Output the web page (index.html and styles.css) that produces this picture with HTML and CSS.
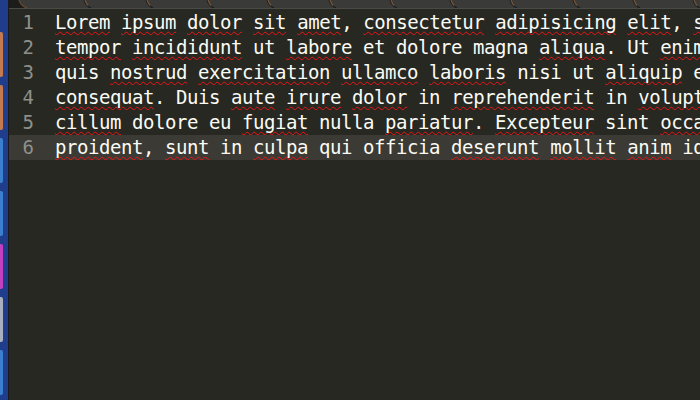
FILE: index.html
```html
<!DOCTYPE html>
<html>
<head>
<meta charset="utf-8">
<link rel="stylesheet" href="styles.css">
</head>
<body>
<div class="screen">
  <div class="launcher">
    <div class="dock-item orange"></div>
    <div class="dock-item orange"></div>
    <div class="dock-item blue"></div>
    <div class="dock-item blue"></div>
    <div class="dock-item magenta"></div>
    <div class="dock-item grey"></div>
    <div class="dock-item blue"></div>
  </div>
  <div class="window">
    <div class="tabbar">
      <svg class="tabs" width="691" height="8" viewBox="0 0 691 8">
        <path d="M0 0 H10 Q12 6 18 8 H0 Z" fill="#1c1c1b"/>
        <g fill="none" stroke-width="1.2">
          <path d="M10 0 Q12 6 18 8" stroke="#6a4a30"/>
          <path d="M75 0 Q77 6 82 8" stroke="#1e1e1d"/><path d="M76 0 Q77.5 4 79 5.5" stroke="#7a5436"/>
          <path d="M137 0 Q139 6 144 8" stroke="#1e1e1d"/><path d="M138 0 Q139.5 4 141 5.5" stroke="#7a5436"/>
          <path d="M198 0 Q200 6 205 8" stroke="#1e1e1d"/><path d="M199 0 Q200.5 4 202 5.5" stroke="#7a5436"/>
          <path d="M258 0 Q260 6 265 8" stroke="#1e1e1d"/><path d="M259 0 Q260.5 4 262 5.5" stroke="#7a5436"/>
          <path d="M320 0 Q322 6 327 8" stroke="#1e1e1d"/><path d="M321 0 Q322.5 4 324 5.5" stroke="#7a5436"/>
          <path d="M381 0 Q383 6 388 8" stroke="#1e1e1d"/><path d="M382 0 Q383.5 4 385 5.5" stroke="#7a5436"/>
          <path d="M441 0 Q443 6 448 8" stroke="#1e1e1d"/><path d="M442 0 Q443.5 4 445 5.5" stroke="#7a5436"/>
          <path d="M501 0 Q503 6 508 8" stroke="#1e1e1d"/><path d="M502 0 Q503.5 4 505 5.5" stroke="#7a5436"/>
          <path d="M564 0 Q566 6 571 8" stroke="#1e1e1d"/><path d="M565 0 Q566.5 4 568 5.5" stroke="#7a5436"/>
          <path d="M624 0 Q626 6 631 8" stroke="#1e1e1d"/><path d="M625 0 Q626.5 4 628 5.5" stroke="#7a5436"/>
          <path d="M684 0 Q686 6 691 8" stroke="#1e1e1d"/><path d="M685 0 Q686.5 4 688 5.5" stroke="#7a5436"/>
        </g>
      </svg>
    </div>
    <div class="editor">
      <div class="row"><span class="num">1</span><span class="code"><span class="sp">Lorem</span> <span class="sp">ipsum</span> <span class="sp">dolor</span> <span class="sp">sit</span> <span class="sp">amet</span>, <span class="sp">consectetur</span> <span class="sp">adipisicing</span> <span class="sp">elit</span>, <span class="sp">sed</span></span></div>
      <div class="row"><span class="num">2</span><span class="code"><span class="sp">tempor</span> <span class="sp">incididunt</span> ut <span class="sp">labore</span> et dolore magna <span class="sp">aliqua</span>. Ut <span class="sp">enim</span> ad</span></div>
      <div class="row"><span class="num">3</span><span class="code">quis <span class="sp">nostrud</span> <span class="sp">exercitation</span> <span class="sp">ullamco</span> <span class="sp">laboris</span> nisi ut <span class="sp">aliquip</span> ex</span></div>
      <div class="row"><span class="num">4</span><span class="code"><span class="sp">consequat</span>. Duis <span class="sp">aute</span> <span class="sp">irure</span> <span class="sp">dolor</span> in <span class="sp">reprehenderit</span> in <span class="sp">voluptate</span></span></div>
      <div class="row"><span class="num">5</span><span class="code"><span class="sp">cillum</span> dolore eu <span class="sp">fugiat</span> nulla <span class="sp">pariatur</span>. <span class="sp">Excepteur</span> sint <span class="sp">occaecat</span></span></div>
      <div class="row current"><span class="num">6</span><span class="code"><span class="sp">proident</span>, <span class="sp">sunt</span> in <span class="sp">culpa</span> qui officia <span class="sp">deserunt</span> <span class="sp">mollit</span> <span class="sp">anim</span> id est</span></div>
    </div>
  </div>
</div>
</body>
</html>
```

FILE: styles.css
```css
html, body {
  margin: 0;
  padding: 0;
  background: #272822;
  width: 700px;
  height: 400px;
  overflow: hidden;
}

.screen {
  display: flex;
  width: 700px;
  height: 400px;
}

.launcher {
  width: 8px;
  flex: none;
  background: #1f3d8a;
  border-right: 1px solid #181a1f;
  display: flex;
  flex-direction: column;
  gap: 8px;
  padding-top: 32px;
  box-sizing: content-box;
}

.dock-item {
  width: 3px;
  height: 45px;
  border-radius: 0 2px 2px 0;
  flex: none;
}

.dock-item.orange { background: #c47a50; }
.dock-item.blue { background: #3b7fcf; }
.dock-item.magenta { background: #c23fc0; }
.dock-item.grey { background: #a9b1c0; }

.window {
  flex: 1;
  display: flex;
  flex-direction: column;
  min-width: 0;
}

.tabbar {
  height: 8px;
  background: #3a3a38;
  border-bottom: 1px solid #4a4a46;
  flex: none;
  overflow: hidden;
}

.tabs {
  display: block;
}

.editor {
  padding-top: 1px;
  font-family: "DejaVu Sans Mono", monospace;
  font-size: 19px;
  letter-spacing: -0.438px;
  line-height: 25px;
  color: #fbfbf5;
}

.row {
  display: flex;
  height: 25px;
  white-space: pre;
  overflow: hidden;
}

.row.current {
  background: #3b3a35;
}

.num {
  width: 25px;
  flex: none;
  text-align: right;
  color: #8f908a;
  letter-spacing: 0;
}

.code {
  padding-left: 21px;
}

.sp {
  text-decoration: underline wavy #f01414;
  text-decoration-thickness: 1.2px;
  text-underline-offset: 2px;
  text-decoration-skip-ink: none;
}
```
